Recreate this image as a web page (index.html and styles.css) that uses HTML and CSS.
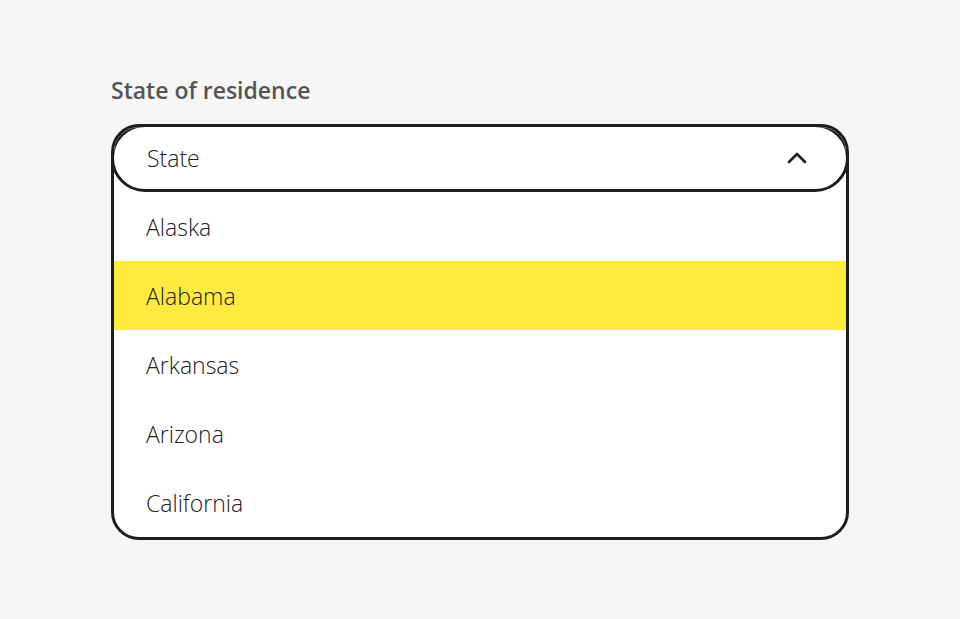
FILE: index.html
```html
<!DOCTYPE html>
<html lang="en">
<head>
<meta charset="utf-8">
<link rel="stylesheet" href="styles.css">
</head>
<body>
<div class="field">
  <div class="label">State of residence</div>
  <div class="listbox">
    <div class="trigger">
      <span class="placeholder">State</span>
      <svg class="chev" width="20" height="12" viewBox="0 0 20 12"><path d="M2 10 L10 2 L18 10" fill="none" stroke="#1e1e1e" stroke-width="2.6" stroke-linecap="round" stroke-linejoin="round"/></svg>
    </div>
    <ul class="options">
      <li class="option">Alaska</li>
      <li class="option active">Alabama</li>
      <li class="option">Arkansas</li>
      <li class="option">Arizona</li>
      <li class="option">California</li>
    </ul>
  </div>
</div>
</body>
</html>
```
FILE: styles.css
```css
html, body {
  margin: 0;
  padding: 0;
  background: #f6f6f6;
  font-family: "Open Sans", "Noto Sans", sans-serif;
}
body {
  padding-top: 74px;
}
.field {
  width: 738px;
  margin: 0 auto;
}
.label {
  font-size: 23px;
  font-weight: 600;
  color: #555555;
  line-height: 32px;
  margin-bottom: 18px;
}
.listbox {
  border: 3px solid #1e1e1e;
  border-radius: 28px;
  background: #ffffff;
  overflow: hidden;
}
.trigger {
  margin: -3px -3px 0;
  height: 68px;
  box-sizing: border-box;
  border: 3px solid #1e1e1e;
  border-radius: 34px;
  display: flex;
  align-items: center;
  justify-content: space-between;
  padding: 0 39px 0 33px;
  background: #fff;
}
.placeholder {
  font-size: 23px;
  font-weight: 300;
  color: #222;
}
.chev {
  display: block;
}
.options {
  list-style: none;
  margin: 0;
  padding: 0;
}
.option {
  height: 69px;
  display: flex;
  align-items: center;
  padding-left: 32px;
  font-size: 23px;
  font-weight: 300;
  color: #222;
}
.option.active {
  background: #ffeb3f;
}
```
